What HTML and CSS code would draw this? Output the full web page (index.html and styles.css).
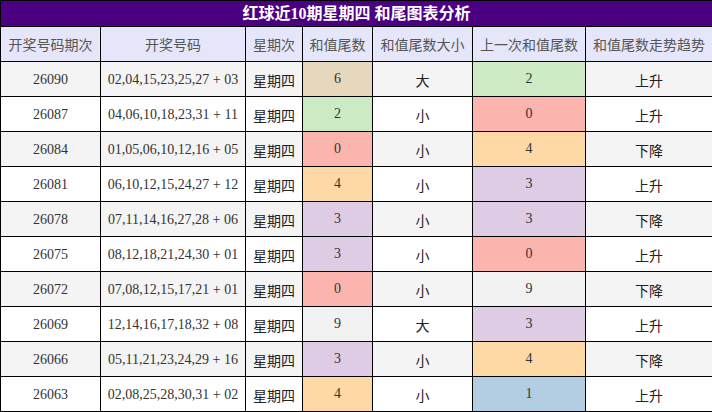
FILE: index.html
```html
<!DOCTYPE html>
<html lang="zh">
<head>
<meta charset="utf-8">
<title>红球近10期星期四 和尾图表分析</title>
<link rel="stylesheet" href="styles.css">
</head>
<body>
<table class="chart">
  <colgroup>
    <col class="c1"><col class="c2"><col class="c3"><col class="c4"><col class="c5"><col class="c6"><col class="c7">
  </colgroup>
  <thead>
    <tr><th class="title" colspan="7">红球近10期星期四 和尾图表分析</th></tr>
    <tr class="head">
      <th>开奖号码期次</th><th>开奖号码</th><th>星期次</th><th>和值尾数</th><th>和值尾数大小</th><th>上一次和值尾数</th><th>和值尾数走势趋势</th>
    </tr>
  </thead>
  <tbody>
    <tr><td>26090</td><td>02,04,15,23,25,27 + 03</td><td class="cjk">星期四</td><td class="n d6">6</td><td class="cjk">大</td><td class="n d2">2</td><td class="cjk">上升</td></tr>
    <tr><td>26087</td><td>04,06,10,18,23,31 + 11</td><td class="cjk">星期四</td><td class="n d2">2</td><td class="cjk">小</td><td class="n d0">0</td><td class="cjk">上升</td></tr>
    <tr><td>26084</td><td>01,05,06,10,12,16 + 05</td><td class="cjk">星期四</td><td class="n d0">0</td><td class="cjk">小</td><td class="n d4">4</td><td class="cjk">下降</td></tr>
    <tr><td>26081</td><td>06,10,12,15,24,27 + 12</td><td class="cjk">星期四</td><td class="n d4">4</td><td class="cjk">小</td><td class="n d3">3</td><td class="cjk">上升</td></tr>
    <tr><td>26078</td><td>07,11,14,16,27,28 + 06</td><td class="cjk">星期四</td><td class="n d3">3</td><td class="cjk">小</td><td class="n d3">3</td><td class="cjk">下降</td></tr>
    <tr><td>26075</td><td>08,12,18,21,24,30 + 01</td><td class="cjk">星期四</td><td class="n d3">3</td><td class="cjk">小</td><td class="n d0">0</td><td class="cjk">上升</td></tr>
    <tr><td>26072</td><td>07,08,12,15,17,21 + 01</td><td class="cjk">星期四</td><td class="n d0">0</td><td class="cjk">小</td><td class="n d9">9</td><td class="cjk">下降</td></tr>
    <tr><td>26069</td><td>12,14,16,17,18,32 + 08</td><td class="cjk">星期四</td><td class="n d9">9</td><td class="cjk">大</td><td class="n d3">3</td><td class="cjk">上升</td></tr>
    <tr><td>26066</td><td>05,11,21,23,24,29 + 16</td><td class="cjk">星期四</td><td class="n d3">3</td><td class="cjk">小</td><td class="n d4">4</td><td class="cjk">下降</td></tr>
    <tr><td>26063</td><td>02,08,25,28,30,31 + 02</td><td class="cjk">星期四</td><td class="n d4">4</td><td class="cjk">小</td><td class="n d1">1</td><td class="cjk">上升</td></tr>
  </tbody>
</table>
</body>
</html>
```
FILE: styles.css
```css
html, body {
  margin: 0;
  padding: 0;
  background: #fff;
}

.chart {
  width: 712px;
  border-collapse: collapse;
  table-layout: fixed;
  font-family: "Liberation Serif", "Noto Sans CJK SC", serif;
  font-size: 14px;
  color: #333;
}

.c1 { width: 100px; }
.c2 { width: 145px; }
.c3 { width: 57px; }
.c4 { width: 70px; }
.c5 { width: 100px; }
.c6 { width: 113px; }
.c7 { width: 127px; }

.chart th,
.chart td {
  border: 1px solid #000;
  padding: 0;
  text-align: center;
  white-space: nowrap;
  overflow: hidden;
}

.chart .title {
  height: 25px;
  background: #4b0082;
  color: #fff;
  font-size: 16px;
  font-weight: bold;
  line-height: 25px;
}

.head th {
  height: 34px;
  background: #e6e6fa;
  color: #555;
  font-weight: normal;
  font-family: "Noto Sans CJK SC", sans-serif;
  font-size: 14px;
}

.chart td {
  height: 32px;
  padding-top: 2px;
  line-height: 18px;
}

.chart tbody tr:nth-child(odd) td { background: #f4f4f4; }
.chart tbody tr:nth-child(even) td { background: #fff; }

.chart td.cjk {
  font-family: "Noto Sans CJK SC", sans-serif;
  color: #222;
  height: 32px;
  padding-top: 2px;
}

.chart td.n {
  height: 33px;
  padding-top: 0;
  padding-bottom: 1px;
}

.chart tbody tr td.d0 { background: #fbb4ae; }
.chart tbody tr td.d1 { background: #b3cde3; }
.chart tbody tr td.d2 { background: #ccebc5; }
.chart tbody tr td.d3 { background: #decbe4; }
.chart tbody tr td.d4 { background: #fed9a6; }
.chart tbody tr td.d6 { background: #e5d8bd; }
.chart tbody tr td.d9 { background: #f2f2f2; }
```
